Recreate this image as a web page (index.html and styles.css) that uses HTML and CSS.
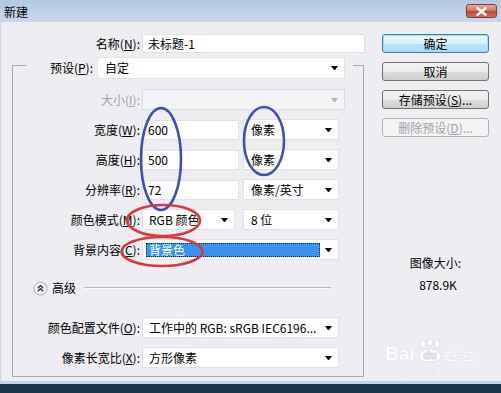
FILE: index.html
```html
<!DOCTYPE html>
<html lang="zh-CN">
<head>
  <meta charset="UTF-8">
  <title>新建</title>
  <link rel="stylesheet" href="styles.css">
</head>
<body>

<div class="window">
  <div class="titlebar">
    <span class="title">新建</span>
    <span class="close-btn">
      <svg width="13" height="9" viewBox="0 0 13 9"><path d="M2.5 1.2 L10.5 7.8 M10.5 1.2 L2.5 7.8" stroke="#fff" stroke-width="2.4" stroke-linecap="round"/></svg>
    </span>
  </div>

  <div class="client">
    <div class="main">
      <div class="name-row">
        <label>名称(<u>N</u>):</label>
        <div class="field name-field">未标题-1</div>
      </div>

      <div class="group">
        <div class="preset-row">
          <label>预设(<u>P</u>):</label>
          <div class="select preset-select">自定<span class="arrow"></span></div>
        </div>

        <div class="row first">
          <label class="disabled">大小(<u>I</u>):</label>
          <div class="select size-select disabled"><span class="arrow"></span></div>
        </div>
        <div class="row">
          <label>宽度(<u>W</u>):</label>
          <div class="field num">600</div>
          <div class="select unit">像素<span class="arrow"></span></div>
        </div>
        <div class="row">
          <label>高度(<u>H</u>):</label>
          <div class="field num">500</div>
          <div class="select unit">像素<span class="arrow"></span></div>
        </div>
        <div class="row">
          <label>分辨率(<u>R</u>):</label>
          <div class="field num">72</div>
          <div class="select unit">像素/英寸<span class="arrow"></span></div>
        </div>
        <div class="row">
          <label>颜色模式(<u>M</u>):</label>
          <div class="select mode">RGB 颜色<span class="arrow"></span></div>
          <div class="select unit">8 位<span class="arrow"></span></div>
        </div>
        <div class="row">
          <label>背景内容(<u>C</u>):</label>
          <div class="select wide bg-select"><span class="highlight">背景色</span><span class="arrow"></span></div>
        </div>

        <div class="advanced">
          <svg class="chevron" width="15" height="15" viewBox="0 0 15 15">
            <circle cx="7.5" cy="7.5" r="6.5" fill="#fafafa" stroke="#a9a9ad"/>
            <path d="M4.8 7.2 L7.5 4.6 L10.2 7.2 M4.8 10.2 L7.5 7.6 L10.2 10.2" fill="none" stroke="#222" stroke-width="1.3"/>
          </svg>
          <span>高级</span>
          <span class="rule"></span>
        </div>

        <div class="row profile">
          <label>颜色配置文件(<u>O</u>):</label>
          <div class="select wide">工作中的 RGB: sRGB IEC6196...<span class="arrow"></span></div>
        </div>
        <div class="row">
          <label>像素长宽比(<u>X</u>):</label>
          <div class="select wide">方形像素<span class="arrow"></span></div>
        </div>
      </div>
    </div>

    <div class="side">
      <button class="btn default">确定</button>
      <button class="btn">取消</button>
      <button class="btn">存储预设(<u>S</u>)...</button>
      <button class="btn" disabled>删除预设(<u>D</u>)...</button>

      <div class="info">
        <div>图像大小:</div>
        <div class="size">878.9K</div>
      </div>
    </div>
  </div>

  <!-- annotation marks drawn over the dialog -->
  <svg class="marks" width="501" height="393" viewBox="0 0 501 393">
    <g fill="none" stroke-width="2.6">
      <ellipse cx="161" cy="159" rx="20" ry="51" stroke="#3f4fb3"/>
      <ellipse cx="264" cy="141" rx="20" ry="34" stroke="#3f4fb3"/>
      <ellipse cx="163.5" cy="220.5" rx="36.5" ry="15.5" stroke="#d8393c"/>
      <ellipse cx="162" cy="251.5" rx="40.5" ry="14.5" stroke="#d8393c"/>
    </g>
  </svg>

  <div class="watermark">
    <div class="wm-logo">
      <span>Bai</span>
      <svg class="paw" width="30" height="26" viewBox="0 0 30 26">
        <g fill="#fff" stroke="#d6d6da" stroke-width="0.8">
          <ellipse cx="8" cy="5" rx="3" ry="4"/>
          <ellipse cx="15" cy="3.5" rx="3" ry="3.5"/>
          <ellipse cx="22" cy="5" rx="3" ry="4"/>
          <path d="M4 15 Q15 4 26 15 Q28 23 15 23 Q2 23 4 15 Z"/>
        </g>
        <text x="15" y="20" text-anchor="middle" font-family="Liberation Sans, sans-serif" font-size="11" font-weight="bold" fill="#fff" stroke="#d6d6da" stroke-width="0.5">du</text>
      </svg>
      <span class="wm-cn">经验</span>
    </div>
    <div class="wm-url">jingyan.baidu.com</div>
  </div>
</div>

</body>
</html>
```

FILE: styles.css
```css
body {
  margin: 0;
  font-family: "Noto Sans CJK SC", sans-serif;
  font-size: 12px;
  line-height: 16px;
  color: #000;
  background: #1b3448;
}

.window {
  position: relative;
  width: 501px;
  height: 393px;
  overflow: hidden;
  background: #1b3448;
}

.titlebar {
  height: 22px;
  display: flex;
  align-items: center;
  justify-content: space-between;
  padding: 0 4px;
  background: linear-gradient(#b4c8e2, #c8d8ed);
}

.title {
  padding-top: 2px;
}

.close-btn {
  width: 29px;
  height: 12px;
  display: flex;
  align-items: center;
  justify-content: center;
  border: 1px solid #7e3d36;
  border-radius: 3px;
  background: linear-gradient(#e8ad9f, #d77565 45%, #c24531 55%, #d2705c);
}

.client {
  height: 362px;
  box-sizing: border-box;
  display: flex;
  padding: 12px 0 0 11px;
  background: #eeedf1;
  border-left: 1px solid #c8d7ea;
  border-bottom: 3px solid #c4d4e8;
}

.main {
  width: 354px;
}

label {
  flex: none;
  text-align: right;
  white-space: nowrap;
}

label.disabled {
  color: #a3a3a7;
}

.name-row {
  display: flex;
  align-items: center;
  height: 19px;
}

.name-row label {
  width: 128px;
  margin-right: 2px;
}

.field,
.select {
  box-sizing: border-box;
  background: #fff;
  border: 1px solid #e1e1e5;
  white-space: nowrap;
}

.field {
  height: 20px;
  line-height: 18px;
  padding-left: 5px;
}

.name-field {
  width: 223px;
  height: 19px;
  line-height: 17px;
}

.num {
  width: 97px;
}

.select {
  height: 21px;
  display: flex;
  align-items: center;
  justify-content: space-between;
  padding: 0 6px 0 7px;
}

.select.disabled {
  background: #f4f4f6;
  border-color: #dcdce0;
}

.arrow {
  width: 1px;
  height: 0;
  margin-left: auto;
  border-top: 4px solid #000;
  border-left: 3px solid transparent;
  border-right: 3px solid transparent;
}

.disabled .arrow {
  border-top-color: #b3b3b7;
}

.group {
  box-sizing: border-box;
  width: 352px;
  margin-top: 12px;
  padding-bottom: 8px;
  border: 1px solid #a9a9ad;
}

.preset-row {
  display: flex;
  align-items: center;
  width: 300px;
  margin: -9px 0 0 13px;
  padding: 0 8px 0 19px;
  background: #eeedf1;
}

.preset-row label {
  width: 48px;
  margin-right: 4px;
}

.preset-select {
  width: 248px;
  height: 22px;
}

.row {
  display: flex;
  align-items: center;
  height: 21px;
  margin-top: 9px;
}

.row.first {
  margin-top: 10px;
}

.row label {
  width: 127px;
  margin-right: 2px;
}

.size-select {
  width: 203px;
}

.unit {
  width: 96px;
  margin-left: 4px;
}

.mode {
  width: 93px;
  margin-right: 4px;
  padding-left: 6px;
}

.wide {
  width: 197px;
  padding-left: 6px;
}

.bg-select {
  padding-left: 3px;
}

.highlight {
  width: 174px;
  height: 14px;
  line-height: 14px;
  box-sizing: border-box;
  padding-left: 3px;
  color: #fff;
  background: #3994f1;
  outline: 1px dotted #0d2a52;
  outline-offset: -1px;
}

.advanced {
  display: flex;
  align-items: center;
  height: 20px;
  margin: 18px 32px 0 20px;
}

.chevron {
  flex: none;
  margin-right: 4px;
}

.rule {
  flex: 1;
  height: 0;
  margin-left: 8px;
  border-top: 1px solid #b9b9bd;
  border-bottom: 1px solid #fafafc;
}

.row.profile {
  margin-top: 19px;
}

.side {
  width: 107px;
  margin-left: 16px;
  display: flex;
  flex-direction: column;
  gap: 9px;
}

.btn {
  height: 19px;
  padding: 0;
  font: inherit;
  line-height: 16px;
  color: #000;
  border: 1px solid #707070;
  border-radius: 3px;
  background: linear-gradient(#f2f2f2, #ebebeb 50%, #dddddd 51%, #cfcfcf);
}

.btn.default {
  border-color: #3c7fb1;
  box-shadow: inset 0 0 0 1px #a6dcf7;
  background: linear-gradient(#eaf6fd, #d9f0fc 50%, #bee6fd 51%, #a7d9f5);
}

.btn:disabled {
  color: #a0a0a4;
  border-color: #adb2b5;
  background: #f4f4f4;
}

.info {
  margin-top: 109px;
  text-align: center;
}

.info .size {
  margin-top: 6px;
  padding-left: 5px;
}

.marks {
  position: absolute;
  top: 0;
  left: 0;
  pointer-events: none;
}

.watermark {
  position: absolute;
  left: 385px;
  top: 339px;
  color: #fff;
  opacity: 0.85;
  text-shadow: 0 0 1px #c9c9ce;
}

.wm-logo {
  display: flex;
  align-items: flex-end;
  font-family: "Liberation Sans", sans-serif;
  font-size: 19px;
  font-weight: bold;
  line-height: 22px;
}

.wm-cn {
  font-family: "Noto Sans CJK SC", sans-serif;
  font-size: 15px;
  font-weight: normal;
}

.wm-url {
  font-family: "Liberation Sans", sans-serif;
  font-size: 9px;
  line-height: 12px;
  padding-left: 2px;
  letter-spacing: 0.5px;
}
```
